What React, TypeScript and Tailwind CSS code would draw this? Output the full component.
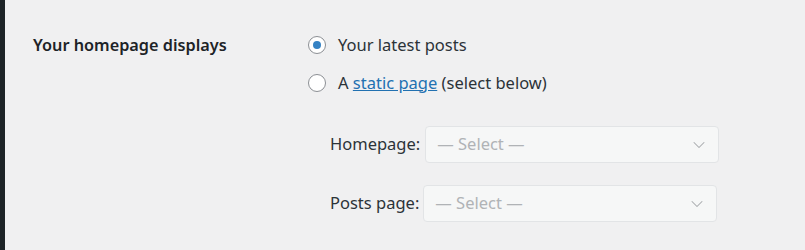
import { ChevronDown } from 'lucide-react';

function Radio({ checked }: { checked?: boolean }) {
  return (
    <span className="flex h-[18px] w-[18px] shrink-0 items-center justify-center rounded-full border border-[#8c8f94] bg-white">
      {checked && <span className="h-2 w-2 rounded-full bg-[#3582c4]" />}
    </span>
  );
}

function FakeSelect({ label, gap }: { label: string; gap: string }) {
  return (
    <div className={`flex items-center ${gap}`}>
      <span className="shrink-0 whitespace-nowrap text-[#2c3338]">{label}</span>
      <div className="flex h-[37px] w-[294px] items-center justify-between rounded-[4px] border border-[#e2e4e6] bg-[#f6f7f7] pl-[11px] pr-[9px] text-[#b0b3b6]">
        <span>— Select —</span>
        <ChevronDown size={20} strokeWidth={1.25} className="text-[#a7aaad]" />
      </div>
    </div>
  );
}

export default function App() {
  return (
    <div
      className="flex h-[250px] w-[805px] bg-[#f0f0f1] text-[16.5px] text-[#2c3338]"
      style={{ fontFamily: '"Segoe UI", "Noto Sans", sans-serif' }}
    >
      <div className="w-[5px] shrink-0 bg-[#1d2327]" />
      <div className="flex pt-[33px] pl-[28px]">
        <div className="w-[275px] whitespace-nowrap text-[16.25px] font-semibold text-[#1d2327]">
          Your homepage displays
        </div>
        <div className="flex flex-col">
          <label className="flex h-6 items-center gap-3">
            <Radio checked />
            <span>Your latest posts</span>
          </label>
          <label className="mt-[14px] flex h-6 items-center gap-3">
            <Radio />
            <span className="whitespace-nowrap">
              A <a className="text-[#2271b1] underline">static page</a> (select below)
            </span>
          </label>
          <div className="mt-[31px] flex flex-col gap-[22px] pl-[22px]">
            <FakeSelect label="Homepage:" gap="gap-[5px]" />
            <FakeSelect label="Posts page:" gap="gap-[4px]" />
          </div>
        </div>
      </div>
    </div>
  );
}
